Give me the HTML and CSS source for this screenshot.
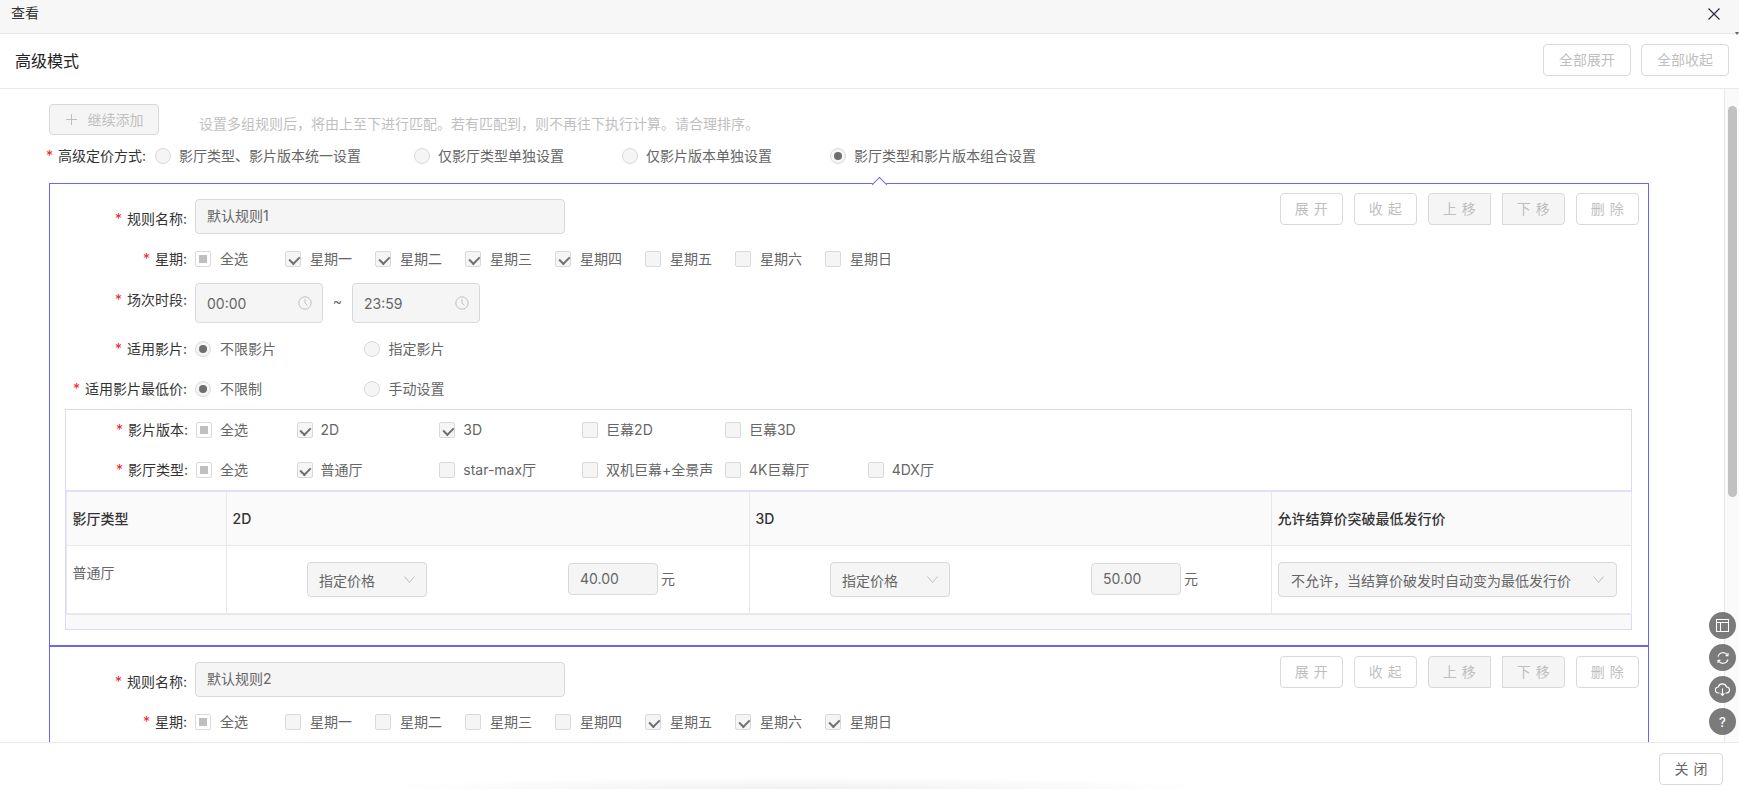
FILE: index.html
```html
<!DOCTYPE html>
<html lang="zh-CN">
<head>
<meta charset="utf-8">
<title>查看</title>
<link rel="stylesheet" href="styles.css">
</head>
<body>
<div class="page">
  <div class="topbar">
    <span>查看</span>
    <svg class="close-x" width="12" height="12" viewBox="0 0 12 12"><path d="M.5.5l11 11M11.5.5l-11 11" fill="none" stroke="#2b2b3a" stroke-width="1.2"/></svg>
    <i class="tick"></i>
  </div>
  <div class="header">
    <h1 class="title">高级模式</h1>
    <div class="header-actions">
      <button class="btn wide">全部展开</button>
      <button class="btn wide">全部收起</button>
    </div>
  </div>
  <div class="main">
    <div class="content">
      <div class="toolbar">
        <button class="btn add"><svg width="11" height="11" viewBox="0 0 11 11"><path d="M5.5 0v11M0 5.5h11" stroke="#bfbfbf" fill="none"/></svg>继续添加</button>
        <span class="hint">设置多组规则后，将由上至下进行匹配。若有匹配到，则不再往下执行计算。请合理排序。</span>
      </div>
      <div class="pricing">
        <span class="pricing-label"><em>*</em>高级定价方式:</span>
        <div class="opts opts-mode">
          <label class="opt"><i class="radio"></i>影厅类型、影片版本统一设置</label>
          <label class="opt"><i class="radio"></i>仅影厅类型单独设置</label>
          <label class="opt"><i class="radio"></i>仅影片版本单独设置</label>
          <label class="opt"><i class="radio on"></i>影厅类型和影片版本组合设置</label>
        </div>
      </div>

      <section class="rule first">
        <div class="rule-head">
          <div class="field name-field">
            <span class="label"><em>*</em>规则名称:</span>
            <div class="input name">默认规则1</div>
          </div>
          <div class="rule-actions">
            <button class="btn act">展 开</button>
            <button class="btn act">收 起</button>
            <button class="btn act fill left">上 移</button>
            <button class="btn act fill right">下 移</button>
            <button class="btn act">删 除</button>
          </div>
        </div>
        <div class="field week-row">
          <span class="label"><em>*</em>星期:</span>
          <div class="opts opts-week">
            <label class="opt"><i class="cb half"></i>全选</label>
            <label class="opt"><i class="cb on"></i>星期一</label>
            <label class="opt"><i class="cb on"></i>星期二</label>
            <label class="opt"><i class="cb on"></i>星期三</label>
            <label class="opt"><i class="cb on"></i>星期四</label>
            <label class="opt"><i class="cb"></i>星期五</label>
            <label class="opt"><i class="cb"></i>星期六</label>
            <label class="opt"><i class="cb"></i>星期日</label>
          </div>
        </div>
        <div class="field time-row">
          <span class="label"><em>*</em>场次时段:</span>
          <div class="input time">00:00<svg width="14" height="14" viewBox="0 0 14 14"><circle cx="7" cy="7" r="6.2" fill="none" stroke="#bfbfbf"/><path d="M7 3.2V7l2.4 2.4" fill="none" stroke="#bfbfbf"/></svg></div>
          <span class="tilde">~</span>
          <div class="input time">23:59<svg width="14" height="14" viewBox="0 0 14 14"><circle cx="7" cy="7" r="6.2" fill="none" stroke="#bfbfbf"/><path d="M7 3.2V7l2.4 2.4" fill="none" stroke="#bfbfbf"/></svg></div>
        </div>
        <div class="field film-row">
          <span class="label"><em>*</em>适用影片:</span>
          <div class="opts opts-two">
            <label class="opt"><i class="radio on"></i>不限影片</label>
            <label class="opt"><i class="radio"></i>指定影片</label>
          </div>
        </div>
        <div class="field min-row">
          <span class="label"><em>*</em>适用影片最低价:</span>
          <div class="opts opts-two">
            <label class="opt"><i class="radio on"></i>不限制</label>
            <label class="opt"><i class="radio"></i>手动设置</label>
          </div>
        </div>

        <div class="inner">
          <div class="field version-row">
            <span class="label short"><em>*</em>影片版本:</span>
            <div class="opts opts-format">
              <label class="opt"><i class="cb half"></i>全选</label>
              <label class="opt"><i class="cb on"></i>2D</label>
              <label class="opt"><i class="cb on"></i>3D</label>
              <label class="opt"><i class="cb"></i>巨幕2D</label>
              <label class="opt"><i class="cb"></i>巨幕3D</label>
            </div>
          </div>
          <div class="field hall-row">
            <span class="label short"><em>*</em>影厅类型:</span>
            <div class="opts opts-format">
              <label class="opt"><i class="cb half"></i>全选</label>
              <label class="opt"><i class="cb on"></i>普通厅</label>
              <label class="opt"><i class="cb"></i>star-max厅</label>
              <label class="opt"><i class="cb"></i>双机巨幕+全景声</label>
              <label class="opt"><i class="cb"></i>4K巨幕厅</label>
              <label class="opt"><i class="cb"></i>4DX厅</label>
            </div>
          </div>
          <div class="table-wrap">
            <table class="price">
              <colgroup><col class="c1"><col class="c2"><col class="c3"><col class="c4"></colgroup>
              <thead>
                <tr><th>影厅类型</th><th>2D</th><th>3D</th><th>允许结算价突破最低发行价</th></tr>
              </thead>
              <tbody>
                <tr>
                  <td class="hall">普通厅</td>
                  <td><div class="price-cell">
                    <div class="input select">指定价格<svg width="11" height="7" viewBox="0 0 11 7"><path d="M.5.5l5 6 5-6" fill="none" stroke="#bfbfbf"/></svg></div>
                    <div class="input num">40.00</div><span class="unit">元</span>
                  </div></td>
                  <td><div class="price-cell">
                    <div class="input select">指定价格<svg width="11" height="7" viewBox="0 0 11 7"><path d="M.5.5l5 6 5-6" fill="none" stroke="#bfbfbf"/></svg></div>
                    <div class="input num">50.00</div><span class="unit">元</span>
                  </div></td>
                  <td><div class="input select long">不允许，当结算价破发时自动变为最低发行价<svg width="11" height="7" viewBox="0 0 11 7"><path d="M.5.5l5 6 5-6" fill="none" stroke="#bfbfbf"/></svg></div></td>
                </tr>
              </tbody>
            </table>
            <div class="hscroll"></div>
          </div>
        </div>
      </section>

      <section class="rule">
        <div class="rule-head">
          <div class="field name-field">
            <span class="label"><em>*</em>规则名称:</span>
            <div class="input name">默认规则2</div>
          </div>
          <div class="rule-actions">
            <button class="btn act">展 开</button>
            <button class="btn act">收 起</button>
            <button class="btn act fill left">上 移</button>
            <button class="btn act fill right">下 移</button>
            <button class="btn act">删 除</button>
          </div>
        </div>
        <div class="field week-row">
          <span class="label"><em>*</em>星期:</span>
          <div class="opts opts-week">
            <label class="opt"><i class="cb half"></i>全选</label>
            <label class="opt"><i class="cb"></i>星期一</label>
            <label class="opt"><i class="cb"></i>星期二</label>
            <label class="opt"><i class="cb"></i>星期三</label>
            <label class="opt"><i class="cb"></i>星期四</label>
            <label class="opt"><i class="cb on"></i>星期五</label>
            <label class="opt"><i class="cb on"></i>星期六</label>
            <label class="opt"><i class="cb on"></i>星期日</label>
          </div>
        </div>
      </section>
    </div>
    <div class="vscroll"><div class="thumb"></div></div>
    <div class="float-tools">
      <span class="tool"><svg width="13" height="13" viewBox="0 0 13 13" fill="none" stroke="#fff"><rect x=".5" y=".5" width="12" height="12"/><path d="M.5 3.5h12M4.5 3.5v9"/></svg></span>
      <span class="tool"><svg width="14" height="14" viewBox="0 0 14 14" fill="none" stroke="#fff" stroke-width="1.1"><path d="M2 5.6A5.2 5.2 0 0 1 11.4 4"/><path d="M12 8.4A5.2 5.2 0 0 1 2.6 10"/><path d="M12 2v2.6H9.6M2 12V9.4h2.4"/></svg></span>
      <span class="tool"><svg width="15" height="13" viewBox="0 0 15 13" fill="none" stroke="#fff" stroke-width="1.1"><path d="M4.5 10H3.6A3 3 0 0 1 3.2 4 4.4 4.4 0 0 1 11.6 4a3 3 0 0 1-.2 6h-1"/><path d="M7.5 5.6v7M5.6 10.4l1.9 2 1.9-2"/></svg></span>
      <span class="tool q">?</span>
    </div>
  </div>
  <div class="footer">
    <button class="btn closer">关 闭</button>
  </div>
</div>
</body>
</html>
```

FILE: styles.css
```css
* { box-sizing: border-box; }
html, body { margin: 0; padding: 0; height: 100%; overflow: hidden; }
body {
  font-family: Inter, "Noto Sans CJK SC", sans-serif;
  font-size: 14px;
  line-height: 20px;
  color: #333;
  background: #fff;
}
.page { position: relative; display: flex; flex-direction: column; height: 789px; }

.topbar {
  position: relative;
  flex: none;
  height: 34px;
  padding: 3px 19px 0 11px;
  display: flex;
  justify-content: space-between;
  background: #f7f7f7;
  border-bottom: 1px solid #e8e8e8;
  color: #333;
}
.close-x { margin-top: 5px; }
.tick {
  position: absolute;
  right: 0;
  bottom: -2px;
  border-left: 2px solid transparent;
  border-right: 2px solid transparent;
  border-top: 3px solid #666;
}

.header {
  flex: none;
  height: 55px;
  display: flex;
  justify-content: space-between;
  padding: 10px 10px 0 15px;
  border-bottom: 1px solid #e8e8e8;
}
.title { margin: 6px 0 0; font-size: 16px; line-height: 22px; font-weight: 400; color: #222; }
.header-actions { display: flex; gap: 10px; height: 32px; }

.btn {
  font: inherit;
  color: #bfbfbf;
  background: #fff;
  border: 1px solid #d9d9d9;
  border-radius: 4px;
  padding: 0;
  display: inline-flex;
  align-items: center;
  justify-content: center;
}
.wide { width: 88px; height: 32px; }

.main { position: relative; flex: 1; min-height: 0; display: flex; overflow: hidden; }
.content { flex: 1; min-width: 0; padding: 15px 75px 0 49px; overflow: hidden; }

.toolbar { display: flex; height: 31px; }
.add { width: 110px; height: 31px; background: #f5f5f5; gap: 11px; padding-left: 1px; }
.hint { margin: 10px 0 0 40px; color: #bfbfbf; }

.pricing { display: flex; margin-top: 11px; height: 20px; padding-left: 0; margin-left: -3px; }
.pricing-label { width: 109px; color: #333; white-space: nowrap; }
.pricing-label em, .label em { font-style: normal; color: #f5222d; margin-right: 5px; }

.opts { display: grid; align-items: center; }
.opts-mode { grid-template-columns: 259px 208px 208px auto; }
.opts-week { grid-template-columns: repeat(8, 90px); }
.opts-two { grid-template-columns: 168.5px auto; }
.opts-format { grid-template-columns: 100.5px repeat(5, 142.8px); }
.opt { display: flex; align-items: center; gap: 8px; color: #666; white-space: nowrap; height: 20px; }
.opts-week .opt, .opts-two .opt { gap: 9px; }

.radio, .cb {
  flex: none;
  position: relative;
  display: block;
  width: 16px;
  height: 16px;
  background: #f5f5f5;
  border: 1px solid #d9d9d9;
}
.radio { border-radius: 50%; }
.radio.on::after {
  content: "";
  position: absolute;
  left: 3px;
  top: 3px;
  width: 8px;
  height: 8px;
  border-radius: 50%;
  background: #6e6e6e;
}
.cb { border-radius: 2px; }
.cb.half { background: #fff; }
.cb.half::after {
  content: "";
  position: absolute;
  left: 3px;
  top: 3px;
  width: 8px;
  height: 8px;
  background: #bfbfbf;
}
.cb.on::after {
  content: "";
  position: absolute;
  left: 4.5px;
  top: 2px;
  width: 4.5px;
  height: 8px;
  border: solid #707070;
  border-width: 0 2px 2px 0;
  transform: rotate(45deg);
}

.rule {
  position: relative;
  width: 1600px;
  height: 300px;
  border: 1px solid #6c66f2;
}
.rule.first { margin-top: 17px; height: 463px; }
.rule.first::before {
  content: "";
  position: absolute;
  left: 824px;
  top: -5.5px;
  width: 10px;
  height: 10px;
  background: #fff;
  border: solid #6c66f2;
  border-width: 1px 0 0 1px;
  transform: rotate(45deg);
}
.rule-head { display: flex; justify-content: space-between; height: 41px; margin-top: 9px; padding-right: 9px; }
.rule-actions { display: flex; height: 32px; }
.act { width: 63.5px; height: 32px; margin-left: 10.5px; word-spacing: 1px; }
.fill { background: #f5f5f5; }
.left { border-radius: 4px 0 0 4px; }
.right { border-radius: 0 4px 4px 0; }

.field { display: flex; align-items: center; }
.name-field { margin-top: 6px; height: 35px; }
.label { width: 145px; padding-right: 8px; text-align: right; color: #333; white-space: nowrap; }
.label.short { width: 130px; padding-right: 8px; }
.name-field .label { padding-top: 4px; }

.input {
  background: #f5f5f5;
  border: 1px solid #d9d9d9;
  border-radius: 4px;
  color: #666;
  display: flex;
  align-items: center;
  flex: none;
}
.input.name { width: 370px; height: 35px; padding: 0 11px 1px; }
.week-row { margin-top: 16px; height: 18px; }
.time-row { margin-top: 15px; height: 40px; }
.time-row .label { padding-bottom: 7px; }
.input.time { width: 128px; height: 40px; padding: 2px 10px 0 11px; justify-content: space-between; }
.input.time svg { margin-top: -2px; }
.tilde { width: 29px; text-align: center; color: #666; padding-bottom: 4px; }
.film-row { margin-top: 16px; height: 20px; }
.min-row { margin-top: 20px; height: 20px; }

.inner {
  width: 1567px;
  height: 221px;
  margin: 10px 0 0 15px;
  border: 1px solid #dcd8f6;
}
.version-row { margin-top: 10px; height: 20px; }
.hall-row { margin-top: 20px; height: 20px; }
.table-wrap { margin-top: 10px; border-top: 2px solid #e3dff8; }
.price { width: 1565px; table-layout: fixed; border-collapse: collapse; }
.c1 { width: 160px; }
.c2 { width: 523px; }
.c3 { width: 522px; }
.c4 { width: 360px; }
.price th {
  height: 53px;
  padding: 2px 5.5px 0;
  text-align: left;
  font-weight: 500;
  color: #333;
  background: #fafafa;
  border: 1px solid #e8e8e8;
  border-top: 0;
}
.price td {
  height: 69px;
  padding: 0 6px;
  border: 1px solid #e8e8e8;
  border-top: 0;
  border-bottom: 2px solid #e8e8e8;
  color: #666;
}
.price td.hall { vertical-align: top; padding: 17px 5.5px 0; }
.price-cell { display: flex; align-items: center; padding-left: 74px; }
.input.select { width: 120px; height: 35px; padding: 3px 11px 0; justify-content: space-between; }
.input.select svg { margin-top: -3px; }
.input.select.long { width: 339px; padding: 3px 12px 0; }
.input.num { width: 90px; height: 32px; margin-left: 141px; padding: 0 11px; }
.unit { margin-left: 3px; color: #666; }
.hscroll { height: 14px; background: #f9f9f9; }

.vscroll {
  flex: none;
  width: 15px;
  padding: 17px 3px 0;
  background: #fafafa;
  border-left: 1px solid #e8e8e8;
}
.thumb { width: 9px; height: 391px; border-radius: 5px; background: #c1c1c1; }

.float-tools {
  position: absolute;
  right: 3px;
  top: 523px;
  display: flex;
  flex-direction: column;
  gap: 5px;
}
.tool {
  width: 27px;
  height: 27px;
  border-radius: 50%;
  background: rgba(90, 90, 90, .8);
  color: #fff;
  display: flex;
  align-items: center;
  justify-content: center;
}
.tool.q { font-weight: 500; font-size: 13px; }

.footer {
  position: relative;
  flex: none;
  height: 47px;
  display: flex;
  justify-content: flex-end;
  padding: 10px 16px 0 0;
  border-top: 1px solid #e8e8e8;
  background: #fff;
}
.footer::before {
  content: "";
  position: absolute;
  left: 370px;
  right: 514px;
  bottom: -12px;
  height: 24px;
  background: radial-gradient(closest-side, #f0f0f0, #fff);
}
.closer { position: relative; width: 64px; height: 32px; color: #666; word-spacing: 1px; }
```
